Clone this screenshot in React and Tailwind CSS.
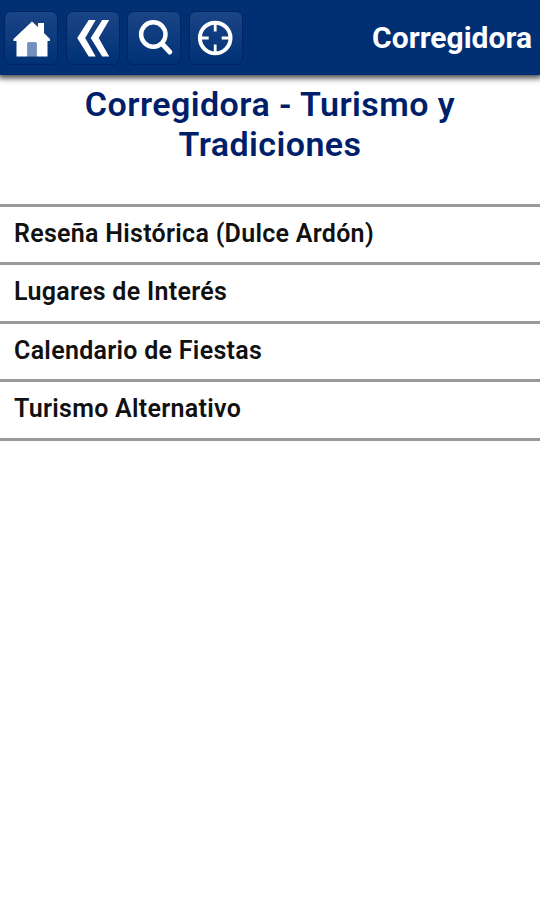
function HomeIcon() {
  return (
    <svg viewBox="1 1 52 52" className="size-full" fill="#fff">
      <path d="M28 10.500 L34 16 V12 H40 V22 L46 28 V30 H43.500 V45.500 H32.500 V31.500 H23.500 V45.500 H12.500 V30 H9.500 V28 Z" />
      <path d="M24 32 H32 V45.500 H24 Z" fill="#7390c0" />
    </svg>
  );
}

function BackIcon() {
  return (
    <svg viewBox="1.8 1 52 52" className="size-full" fill="#fff">
      <path d="M23.500 9 H30.500 L20 27 L30.500 45.500 H23.500 L12 27 Z" />
      <path d="M37 9 H44 L33.500 27 L44 45.500 H37 L25.500 27 Z" />
    </svg>
  );
}

function SearchIcon() {
  return (
    <svg viewBox="1 1 52 52" className="size-full" fill="none" stroke="#fff" strokeLinecap="round">
      <circle cx="26.300" cy="23.500" r="12.200" strokeWidth="4.400" />
      <path d="M35.300 33 L42.800 41" strokeWidth="5" />
    </svg>
  );
}

function TargetIcon() {
  return (
    <svg viewBox="1.8 1 52 52" className="size-full" fill="none" stroke="#fff">
      <circle cx="27" cy="27" r="15.300" strokeWidth="4" />
      <path d="M27 12 V20.500 M27 33.500 V42 M12 27 H20.500 M33.500 27 H42" strokeWidth="2.800" />
    </svg>
  );
}

const buttons = [
  { label: 'Inicio', Icon: HomeIcon },
  { label: 'Regresar', Icon: BackIcon },
  { label: 'Buscar', Icon: SearchIcon },
  { label: 'Ubicación', Icon: TargetIcon },
];

const items = [
  'Reseña Histórica (Dulce Ardón)',
  'Lugares de Interés',
  'Calendario de Fiestas',
  'Turismo Alternativo',
];

export default function App() {
  return (
    <div className="min-h-[900px] bg-white font-['Roboto',sans-serif]">
      <header className="flex h-[75px] items-center justify-between bg-[#003073] pr-2 pl-1 shadow-[0_1px_6px_2px_rgba(0,0,0,0.75)]">
        <div className="flex gap-[7.500px]">
          {buttons.map(({ label, Icon }) => (
            <button
              key={label}
              aria-label={label}
              className="size-[54px] rounded-[7px] border-[1.500px] border-[#002363] bg-linear-to-b from-[#1a4586] to-[#003176]"
            >
              <Icon />
            </button>
          ))}
        </div>
        <h1 className="text-[30px] leading-[34px] font-bold text-white">Corregidora</h1>
      </header>
      <h2 className="px-10 pt-[10px] text-center text-[34px] leading-[39.500px] font-semibold tracking-[0.440px] text-[#001f6b]">
        Corregidora - Turismo y Tradiciones
      </h2>
      <ul className="mt-[39.500px] border-t-[3px] border-[#999]">
        {items.map((item) => (
          <li
            key={item}
            className="flex h-[58.500px] items-center border-b-[3px] border-[#999] px-[14px] pb-[2px] text-[25px] font-semibold tracking-[0.290px] text-[#111]"
          >
            {item}
          </li>
        ))}
      </ul>
    </div>
  );
}
